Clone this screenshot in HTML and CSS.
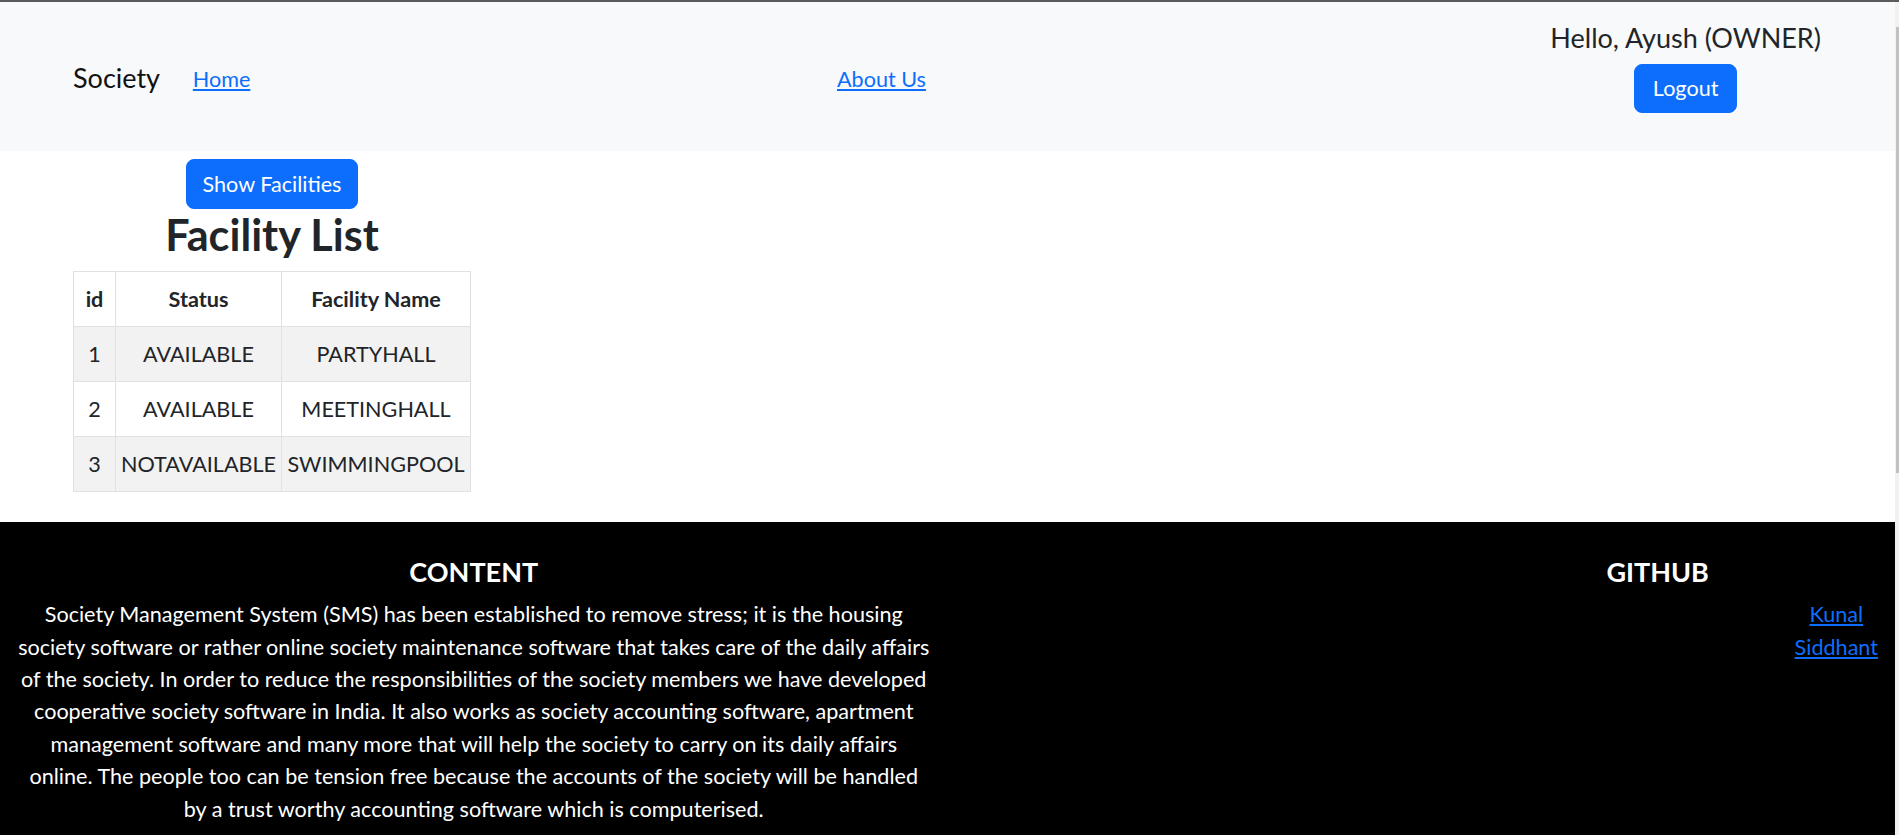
FILE: index.html
```html
<!DOCTYPE html>
<html lang="en">
<head>
<meta charset="utf-8">
<title>Society</title>
<link rel="stylesheet" href="styles.css">
</head>
<body>
<div class="chrome-line"></div>
<div class="frame">
  <div class="page">
    <nav class="navbar">
      <a class="brand" href="#">Society</a>
      <a class="nav-link" href="#">Home</a>
      <a class="nav-link about" href="#">About Us</a>
      <div class="user">
        <div class="hello">Hello, Ayush (OWNER)</div>
        <button class="btn">Logout</button>
      </div>
    </nav>

    <main class="content">
      <div class="facility">
        <button class="btn">Show Facilities</button>
        <h2 class="title">Facility List</h2>
        <table class="table">
          <thead>
            <tr><th class="c-id">id</th><th class="c-status">Status</th><th class="c-name">Facility Name</th></tr>
          </thead>
          <tbody>
            <tr class="odd"><td>1</td><td>AVAILABLE</td><td>PARTYHALL</td></tr>
            <tr><td>2</td><td>AVAILABLE</td><td>MEETINGHALL</td></tr>
            <tr class="odd"><td>3</td><td>NOTAVAILABLE</td><td>SWIMMINGPOOL</td></tr>
          </tbody>
        </table>
      </div>
    </main>

    <footer class="footer">
      <div class="col-content">
        <h5 class="f-title">CONTENT</h5>
        <p class="f-text">Society Management System (SMS) has been established to remove stress; it is the housing society software or rather online society maintenance software that takes care of the daily affairs of the society. In order to reduce the responsibilities of the society members we have developed cooperative society software in India. It also works as society accounting software, apartment management software and many more that will help the society to carry on its daily affairs online. The people too can be tension free because the accounts of the society will be handled by a trust worthy accounting software which is computerised.</p>
      </div>
      <div class="col-spacer"></div>
      <div class="col-github">
        <h5 class="f-title">GITHUB</h5>
        <ul class="links">
          <li><a href="#">Kunal</a></li>
          <li><a href="#">Siddhant</a></li>
        </ul>
      </div>
    </footer>
  </div>
  <div class="scrollbar"><div class="thumb"></div></div>
</div>
</body>
</html>
```
FILE: styles.css
```css
* { box-sizing: border-box; }
html, body { margin: 0; padding: 0; }
body {
  font-family: Lato, "Open Sans", sans-serif;
  font-size: 21.6px;
  line-height: 32.4px;
  color: #212529;
  background: #fff;
  height: 835px;
  overflow: hidden;
}
.chrome-line { height: 2px; background: #5b5b5b; }
.frame { display: flex; height: 833px; }
.page { flex: 1; min-width: 0; display: flex; flex-direction: column; }
.scrollbar { width: 4px; background: #f1f1f1; padding-top: 25px; display: flex; justify-content: flex-end; }
.thumb { width: 3px; height: 446px; background: #c1c1c1; }

/* navbar */
.navbar {
  background: #f8f9fa;
  height: 149px;
  display: flex;
  align-items: center;
  padding: 0 74px 0 73px;
}
.brand {
  font-size: 27px;
  line-height: 40px;
  color: #111;
  text-decoration: none;
  margin: 5px 22px 0 0;
  padding-bottom: 2px;
}
.nav-link {
  color: #0d6efd;
  text-decoration: underline;
  padding: 0 10.8px;
  margin-top: 5px;
  line-height: 32.4px;
}
.about { margin-left: 565px; }
.user {
  margin-left: auto;
  align-self: flex-start;
  padding-top: 16px;
  display: flex;
  flex-direction: column;
  align-items: center;
}
.hello { font-size: 27px; line-height: 40.5px; color: #212529; }

.btn {
  font-family: inherit;
  font-size: 21.6px;
  line-height: 32.4px;
  color: #fff;
  background: #0d6efd;
  border: 1px solid #0d6efd;
  border-radius: 8px;
  padding: 8px 16px;
  cursor: pointer;
}
.user .btn { margin-top: 5px; padding: 7.5px 18px; }

/* content */
.content { padding: 8px 0 30px 73px; }
.facility { display: inline-block; text-align: center; }
.title {
  font-size: 43.2px;
  line-height: 51.8px;
  font-weight: 700;
  margin: 0 0 10px;
  color: #212529;
}
.table {
  border-collapse: collapse;
  border: 1px solid #dee2e6;
  text-align: center;
}
.table th, .table td {
  border: 1px solid #dee2e6;
  padding: 10.8px 4px;
  line-height: 32.4px;
  white-space: nowrap;
}
.table th { font-weight: 700; color: #212529; }
.table td { color: #212529; }
.c-id { width: 42px; }
.c-status { width: 166px; }
.c-name { width: 189px; }
.table tr.odd td { background: #f2f2f2; }

/* footer */
.footer {
  flex: 1;
  background: #000;
  color: #fff;
  display: flex;
  padding-top: 34px;
}
.col-content { width: 50%; padding: 0 16.8px; text-align: center; }
.col-spacer { width: 25%; }
.col-github { width: 25%; padding: 0 17px 0 16px; }
.f-title {
  font-size: 27px;
  line-height: 32.4px;
  font-weight: 700;
  margin: 0 0 9.5px;
  text-align: center;
}
.f-text { margin: 0; }
.links {
  list-style: none;
  margin: 0 0 0 auto;
  padding: 0;
  width: max-content;
  text-align: center;
}
.links a { color: #0d6efd; text-decoration: underline; }
```
